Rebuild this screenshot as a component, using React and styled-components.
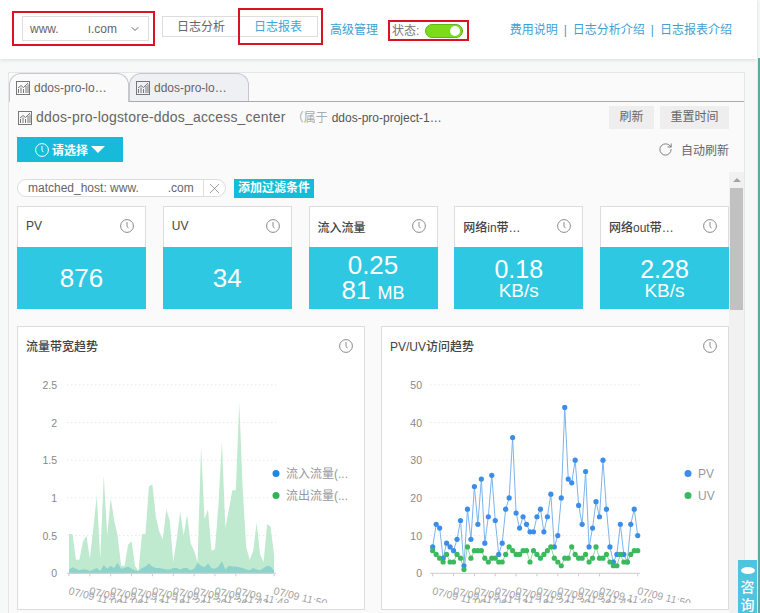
import React from "react";
import styled, { createGlobalStyle } from "styled-components";
import { ChevronDown, RotateCw, X } from "lucide-react";

const FONT = `"Liberation Sans", "Noto Sans CJK SC", sans-serif`;

const Global = createGlobalStyle`
  html, body { margin: 0; padding: 0; width: 760px; height: 613px; overflow: hidden; background: #f7f8f8; }
  body { font-family: ${FONT}; font-size: 12px; color: #666; }
  * { box-sizing: border-box; }
`;

const Page = styled.div`
  position: relative;
  display: flex;
  width: 760px;
  height: 613px;
  overflow: hidden;
`;
const Main = styled.div`
  width: 757px;
  display: flex;
  flex-direction: column;
`;
const EdgeStrip = styled.div`
  width: 3px;
  margin-top: 58px;
  border-left: 1px solid #e6ecec;
  background: #5fa9a2;
`;
const Header = styled.header`
  height: 59px;
  flex: none;
  background: #fff;
  box-shadow: 0 1px 4px rgba(0, 0, 0, 0.12);
  display: flex;
  align-items: flex-start;
  padding: 16px 25px 0 22px;
`;
const Annotated = styled.div`
  position: relative;
  &::after {
    content: "";
    position: absolute;
    border: 2px solid #d9141e;
    pointer-events: none;
    top: ${(p) => p.$t}px;
    left: ${(p) => p.$l}px;
    right: ${(p) => p.$r}px;
    bottom: ${(p) => p.$b}px;
  }
`;
const Select = styled.div`
  width: 127px;
  height: 25px;
  border: 1px solid #ddd;
  display: flex;
  align-items: center;
  padding: 0 7px 0 7px;
  color: #666;
`;
const SelectText = styled.span`
  flex: 1;
  display: flex;
  gap: 29px;
`;
const ButtonGroup = styled.div`
  display: flex;
  margin-left: 13px;
  border: 1px solid #ddd;
  height: 21px;
`;
const GroupButton = styled.div`
  width: ${(p) => p.$w}px;
  height: 19px;
  line-height: 21px;
  text-align: center;
  color: ${(p) => (p.$active ? "#3aa8d8" : "#666")};
`;
const LinkText = styled.a`
  color: #3f9fd1;
  white-space: nowrap;
`;
const AdvancedLink = styled(LinkText)`
  margin: 6px 0 0 12px;
  line-height: 16px;
`;
const StatusBox = styled(Annotated)`
  margin: 8px 0 0 14px;
  display: flex;
  align-items: center;
  gap: 6px;
  height: 14px;
  color: #777;
`;
const StatusLabel = styled.span`
  padding-bottom: 3px;
`;
const Switch = styled.div`
  width: 38px;
  height: 14px;
  border-radius: 7px;
  background: #7bdc1c;
  border: 1px solid #62b51d;
  display: flex;
  align-items: center;
  justify-content: flex-end;
  padding-right: 2px;
`;
const Knob = styled.div`
  width: 10px;
  height: 10px;
  border-radius: 50%;
  background: #fff;
`;
const TopLinks = styled.div`
  margin: 6px 0 0 auto;
  display: flex;
  gap: 6px;
  line-height: 16px;
`;
const Panel = styled.section`
  margin: 13px 12px 0 8px;
  flex: 1;
  min-height: 0;
  background: #fafafa;
  border: 1px solid #e6e6e6;
  border-bottom: 0;
  display: flex;
  flex-direction: column;
`;
const TabBar = styled.div`
  display: flex;
  height: 29px;
  flex: none;
  border-bottom: 1px solid #aaa;
`;
const Tab = styled.div`
  width: 120px;
  height: ${(p) => (p.$active ? 29 : 28)}px;
  border: 1px solid #c4c8cc;
  border-bottom: 0;
  border-radius: 12px 12px 0 0;
  background: ${(p) => (p.$active ? "#fafafa" : "#eef0f3")};
  display: flex;
  align-items: center;
  gap: 4px;
  padding: 0 0 0 6px;
  color: #666;
  z-index: 1;
`;
const TitleRow = styled.div`
  display: flex;
  align-items: center;
  height: 27px;
  margin-top: 2px;
  padding: 0 15px 0 9px;
`;
const Title = styled.div`
  margin-left: 4px;
  padding-bottom: 2px;
  font-size: 14px;
  letter-spacing: 0.19px;
  color: #666;
  white-space: nowrap;
`;
const Owner = styled.div`
  margin-left: 6px;
  padding-bottom: 2px;
  color: #aaa;
  white-space: nowrap;
`;
const OwnerName = styled.span`
  margin-left: 4px;
  color: #555;
`;
const GreyButton = styled.div`
  height: 23px;
  line-height: 23px;
  margin-left: ${(p) => p.$ml || 0}px;
  width: ${(p) => p.$w}px;
  background: #eee;
  color: #666;
  text-align: center;
`;
const Spacer = styled.div`
  flex: 1;
`;
const TimeRow = styled.div`
  display: flex;
  align-items: center;
  justify-content: space-between;
  margin-top: 6px;
  height: 25px;
  padding: 0 15px 0 8px;
`;
const TimeButton = styled.div`
  width: 106px;
  height: 25px;
  background: #17bbd9;
  color: #fff;
  font-weight: 700;
  display: flex;
  align-items: center;
  justify-content: center;
  gap: 3px;
`;
const Caret = styled.span`
  width: 0;
  height: 0;
  border-left: 7px solid transparent;
  border-right: 7px solid transparent;
  border-top: 7px solid #fff;
`;
const AutoRefresh = styled.div`
  display: flex;
  align-items: center;
  gap: 8px;
  color: #666;
`;
const ScrollArea = styled.div`
  margin-top: 10px;
  flex: 1;
  min-height: 0;
  display: flex;
`;
const ScrollContent = styled.div`
  width: 721px;
  overflow: hidden;
  padding: 7px 0 0 8px;
`;
const Scrollbar = styled.div`
  width: 15px;
  background: #f1f1f1;
  display: flex;
  flex-direction: column;
  align-items: center;
  padding-top: 6px;
`;
const ScrollArrow = styled.div`
  width: 0;
  height: 0;
  border-left: 4px solid transparent;
  border-right: 4px solid transparent;
  border-bottom: 4px solid #a3a3a3;
`;
const ScrollThumb = styled.div`
  width: 13px;
  height: 122px;
  margin-top: 6px;
  background: #c1c1c1;
`;
const FilterRow = styled.div`
  display: flex;
  align-items: flex-start;
  gap: 8px;
`;
const FilterPill = styled.div`
  width: 209px;
  height: 18px;
  background: #fff;
  border: 1px solid #ddd;
  border-radius: 9px;
  display: flex;
  align-items: center;
  padding-left: 10px;
  color: #666;
  white-space: nowrap;
`;
const FilterValue = styled.span`
  width: 176px;
  display: flex;
  gap: 29px;
  height: 16px;
  line-height: 16px;
  border-right: 1px solid #ddd;
`;
const FilterClose = styled.span`
  flex: 1;
  display: flex;
  justify-content: center;
  color: #777;
`;
const AddFilter = styled.div`
  width: 80px;
  height: 19px;
  line-height: 19px;
  background: #13bcd8;
  color: #fff;
  font-weight: 700;
  text-align: center;
`;
const Metrics = styled.div`
  display: flex;
  gap: 16.75px;
  margin-top: 8px;
`;
const MetricCard = styled.div`
  width: 129px;
  flex: none;
  height: 103px;
  border: 1px solid #ddd;
  border-bottom: 0;
  background: #fff;
  display: flex;
  flex-direction: column;
`;
const CardHead = styled.div`
  height: ${(p) => p.$h}px;
  flex: none;
  display: flex;
  align-items: center;
  justify-content: space-between;
  padding: 0 11px ${(p) => p.$pb}px 8px;
  font-weight: 500;
  color: #444;
  white-space: nowrap;
`;
const MetricValue = styled.div`
  flex: 1;
  margin: 0 -1px;
  padding-top: ${(p) => p.$pt}px;
  background: #2ec8e2;
  color: #fff;
  display: flex;
  flex-direction: column;
  align-items: center;
  justify-content: center;
  text-align: center;
  font-size: ${(p) => p.$size}px;
  line-height: ${(p) => p.$lh}px;
`;
const Unit = styled.span`
  font-size: ${(p) => p.$size}px;
`;
const Charts = styled.div`
  display: flex;
  gap: 16px;
  margin-top: 17px;
`;
const ChartCard = styled.div`
  width: 348px;
  flex: none;
  height: 284px;
  background: #fff;
  border: 1px solid #ddd;
`;
const ChartSvg = styled.svg`
  display: block;
  font-family: ${FONT};
`;
const Consult = styled.div`
  position: absolute;
  left: 738px;
  top: 560px;
  width: 19px;
  height: 60px;
  background: #4ec4de;
  color: #fff;
  font-size: 14px;
  font-weight: 500;
  line-height: 18px;
  text-align: center;
  padding-top: 7px;
  display: flex;
  flex-direction: column;
  align-items: center;
`;
const ConsultIcon = styled.div`
  width: 14px;
  height: 7px;
  border-radius: 50%;
  background: #fff;
  margin-bottom: 4px;
`;

const ChartIcon = ({ size = 14 }) => (
  <svg width={size} height={size} viewBox="0 0 14 14" fill="none" stroke="#777" strokeWidth="1">
    <rect x="0.5" y="0.5" width="13" height="13" />
    <path d="M2.5 12V8M5 12V6.5M7.5 12V8M10 12V5M12 12V3.5M2 7l3-2.5 2.5 2L12 2" />
  </svg>
);

const Clock = ({ color = "#8a8a8a", size = 14 }) => (
  <svg width={size} height={size} viewBox="0 0 14 14" fill="none" stroke={color} strokeWidth="1">
    <circle cx="7" cy="7" r="6.4" />
    <path d="M7 3v4.2l1.4 2" />
  </svg>
);

const PV = [7,13,12,4,8,7,6,9,14,2,17,9,23,13,25,8,15,26,14,5,8,17,20,36,16,12,15,13,11,11,15,17,11,15,21,7,10,20,44,25,24,30,18,13,27,7,12,19,15,30,17,7,3,5,13,5,3,13,17,10];
const UV = [6,5,4,3,5,3,3,5,4,1,7,4,6,6,6,4,3,4,4,3,3,5,7,6,5,5,6,6,3,6,5,4,5,6,7,4,3,2,4,4,7,5,4,4,5,3,4,7,4,4,5,3,2,2,5,3,3,5,6,6];
const OUT = [.52,.52,.18,.18,.42,.5,.2,.6,1.03,.2,1.3,.5,1,.7,.5,.1,.1,.38,.43,.1,.03,.52,.52,1.15,1.18,.75,.55,.45,.85,.7,.15,.45,.82,.5,.78,.4,.3,.15,1.68,.72,.85,.3,.32,.9,1.75,.6,.85,1.1,1.1,2.27,1.1,.35,.18,.3,.67,.25,.15,.65,.62,.25];
const IN = [.05,.08,.06,.04,.05,.05,.03,.05,.07,.03,.11,.06,.1,.07,.14,.06,.07,.09,.06,.04,.03,.07,.09,.13,.09,.07,.07,.06,.05,.05,.07,.07,.05,.07,.07,.04,.06,.14,.1,.08,.13,.07,.06,.09,.16,.05,.1,.09,.09,.08,.07,.05,.04,.07,.05,.04,.07,.1,.09,.04];
const TIMES = ["11:00","11:06","11:12","11:18","11:24","11:30","11:36","11:42","11:48","11:50"];
const TICKS = [0,6,12,18,24,30,36,42,48,59];

function Chart({ x0, gridFrom, gridTo, labelX, legendX, yLabels, max, legend, children }) {
  const y0 = 202.3;
  const h = 188.5;
  const xAt = (i) => x0 + i * 3.475;
  return (
    <ChartSvg width="346" height="232" viewBox="0 0 346 232">
      {yLabels.map((l, i) => {
        const y = y0 - (i / (yLabels.length - 1)) * h;
        return (
          <g key={l}>
            {i > 0 && <line x1={gridFrom} x2={gridTo} y1={y} y2={y} stroke="#e8e8e8" strokeDasharray="1.5 2.5" />}
            <text x={labelX} y={y + 4} textAnchor="end" fontSize="10.5" fill="#888">{l}</text>
          </g>
        );
      })}
      {children(xAt, (v) => y0 - (v / max) * h)}
      <line x1={gridFrom} x2={gridTo} y1={y0} y2={y0} stroke="#ccc" />
      {TICKS.map((t, i) => (
        <g key={t}>
          <line x1={xAt(t)} x2={xAt(t)} y1={y0} y2={y0 + 3} stroke="#ccc" />
          <text
            transform={`translate(${xAt(t) - 1} 223) rotate(14)`}
            fontSize="10.5"
            fill="#a2a2a2"
          >{`07/09 ${TIMES[i]}`}</text>
        </g>
      ))}
      {legend.map((l, i) => (
        <g key={l.name}>
          <circle cx={legendX} cy={102.5 + i * 22} r="3.5" fill={l.color} />
          <text x={legendX + 10} y={106.5 + i * 22} fontSize="12" fill="#999">{l.name}</text>
        </g>
      ))}
    </ChartSvg>
  );
}

const areaPath = (data, xAt, yAt) =>
  `M${xAt(0)} ${yAt(0)}` + data.map((v, i) => `L${xAt(i)} ${yAt(v)}`).join("") + `L${xAt(data.length - 1)} ${yAt(0)}Z`;

const linePts = (data, xAt, yAt) => data.map((v, i) => `${xAt(i)},${yAt(v)}`).join(" ");

const metrics = [
  { t: "PV", v: "876", size: 26, lh: 30, pt: 0 },
  { t: "UV", v: "34", size: 26, lh: 30, pt: 0 },
  { t: "流入流量", v: "0.25", v2: "81 ", unit: "MB", uSize: 18, size: 26, lh: 25, pt: 3 },
  { t: "网络in带…", v: "0.18", unit: "KB/s", uSize: 19, size: 25, lh: 22, pt: 4 },
  { t: "网络out带…", v: "2.28", unit: "KB/s", uSize: 19, size: 25, lh: 22, pt: 4 },
];

export default function App() {
  return (
    <Page>
      <Global />
      <Main>
        <Header>
          <Annotated $t={-5} $l={-10} $r={-6} $b={-5}>
            <Select>
              <SelectText>
                <span>www.</span>
                <span>ı.com</span>
              </SelectText>
              <ChevronDown size={12} color="#666" />
            </Select>
          </Annotated>
          <ButtonGroup>
            <GroupButton $w={76}>日志分析</GroupButton>
            <Annotated $t={-9} $l={-1} $r={-6} $b={-9}>
              <GroupButton $w={78} $active>日志报表</GroupButton>
            </Annotated>
          </ButtonGroup>
          <AdvancedLink>高级管理</AdvancedLink>
          <StatusBox $t={-4} $l={-4} $r={-6} $b={-3}>
            <StatusLabel>状态:</StatusLabel>
            <Switch><Knob /></Switch>
          </StatusBox>
          <TopLinks>
            <LinkText>费用说明</LinkText>
            <LinkText>|</LinkText>
            <LinkText>日志分析介绍</LinkText>
            <LinkText>|</LinkText>
            <LinkText>日志报表介绍</LinkText>
          </TopLinks>
        </Header>
        <Panel>
          <TabBar>
            <Tab $active><ChartIcon />ddos-pro-lo…</Tab>
            <Tab><ChartIcon />ddos-pro-lo…</Tab>
          </TabBar>
          <TitleRow>
            <ChartIcon />
            <Title>ddos-pro-logstore-ddos_access_center</Title>
            <Owner>（属于<OwnerName>ddos-pro-project-1…</OwnerName></Owner>
            <Spacer />
            <GreyButton $w={45}>刷新</GreyButton>
            <GreyButton $w={69} $ml={6}>重置时间</GreyButton>
          </TitleRow>
          <TimeRow>
            <TimeButton><Clock color="#fff" />请选择<Caret /></TimeButton>
            <AutoRefresh><RotateCw size={15} strokeWidth={1.2} color="#555" />自动刷新</AutoRefresh>
          </TimeRow>
          <ScrollArea>
            <ScrollContent>
              <FilterRow>
                <FilterPill>
                  <FilterValue>
                    <span>matched_host: www.</span>
                    <span>.com</span>
                  </FilterValue>
                  <FilterClose><X size={17} strokeWidth={1} /></FilterClose>
                </FilterPill>
                <AddFilter>添加过滤条件</AddFilter>
              </FilterRow>
              <Metrics>
                {metrics.map((m) => (
                  <MetricCard key={m.t}>
                    <CardHead $h={40} $pb={2}>{m.t}<Clock /></CardHead>
                    <MetricValue $size={m.size} $lh={m.lh} $pt={m.pt}>
                      <span>{m.v}</span>
                      {m.v2 ? (
                        <span>{m.v2}<Unit $size={m.uSize}>{m.unit}</Unit></span>
                      ) : m.unit ? (
                        <Unit $size={m.uSize}>{m.unit}</Unit>
                      ) : null}
                    </MetricValue>
                  </MetricCard>
                ))}
              </Metrics>
              <Charts>
                <ChartCard>
                  <CardHead $h={44} $pb={7}>流量带宽趋势<Clock /></CardHead>
                  <Chart
                    x0={51}
                    gridFrom={49}
                    gridTo={258}
                    labelX={39}
                    legendX={258}
                    yLabels={["0", "0.5", "1", "1.5", "2", "2.5"]}
                    max={2.5}
                    legend={[
                      { name: "流入流量(...", color: "#1e88e5" },
                      { name: "流出流量(...", color: "#2fb45a" },
                    ]}
                  >
                    {(xAt, yAt) => (
                      <>
                        <path d={areaPath(OUT, xAt, yAt)} fill="#c0ead0" />
                        <path d={areaPath(IN, xAt, yAt)} fill="#8ed2cc" />
                      </>
                    )}
                  </Chart>
                </ChartCard>
                <ChartCard>
                  <CardHead $h={44} $pb={7}>PV/UV访问趋势<Clock /></CardHead>
                  <Chart
                    x0={50.7}
                    gridFrom={48}
                    gridTo={258}
                    labelX={40}
                    legendX={306}
                    yLabels={["0", "10", "20", "30", "40", "50"]}
                    max={50}
                    legend={[
                      { name: "PV", color: "#3b8de8" },
                      { name: "UV", color: "#3cb95c" },
                    ]}
                  >
                    {(xAt, yAt) => (
                      <>
                        <polyline points={linePts(PV, xAt, yAt)} fill="none" stroke="#7db4ec" strokeWidth="1" />
                        <polyline points={linePts(UV, xAt, yAt)} fill="none" stroke="#8fd8a2" strokeWidth="1" />
                        {PV.map((v, i) => <circle key={i} cx={xAt(i)} cy={yAt(v)} r="2.6" fill="#3b8de8" />)}
                        {UV.map((v, i) => <circle key={i} cx={xAt(i)} cy={yAt(v)} r="2.6" fill="#3cb95c" />)}
                      </>
                    )}
                  </Chart>
                </ChartCard>
              </Charts>
            </ScrollContent>
            <Scrollbar>
              <ScrollArrow />
              <ScrollThumb />
            </Scrollbar>
          </ScrollArea>
        </Panel>
      </Main>
      <EdgeStrip />
      <Consult>
        <ConsultIcon />
        <span>咨</span>
        <span>询</span>
      </Consult>
    </Page>
  );
}
